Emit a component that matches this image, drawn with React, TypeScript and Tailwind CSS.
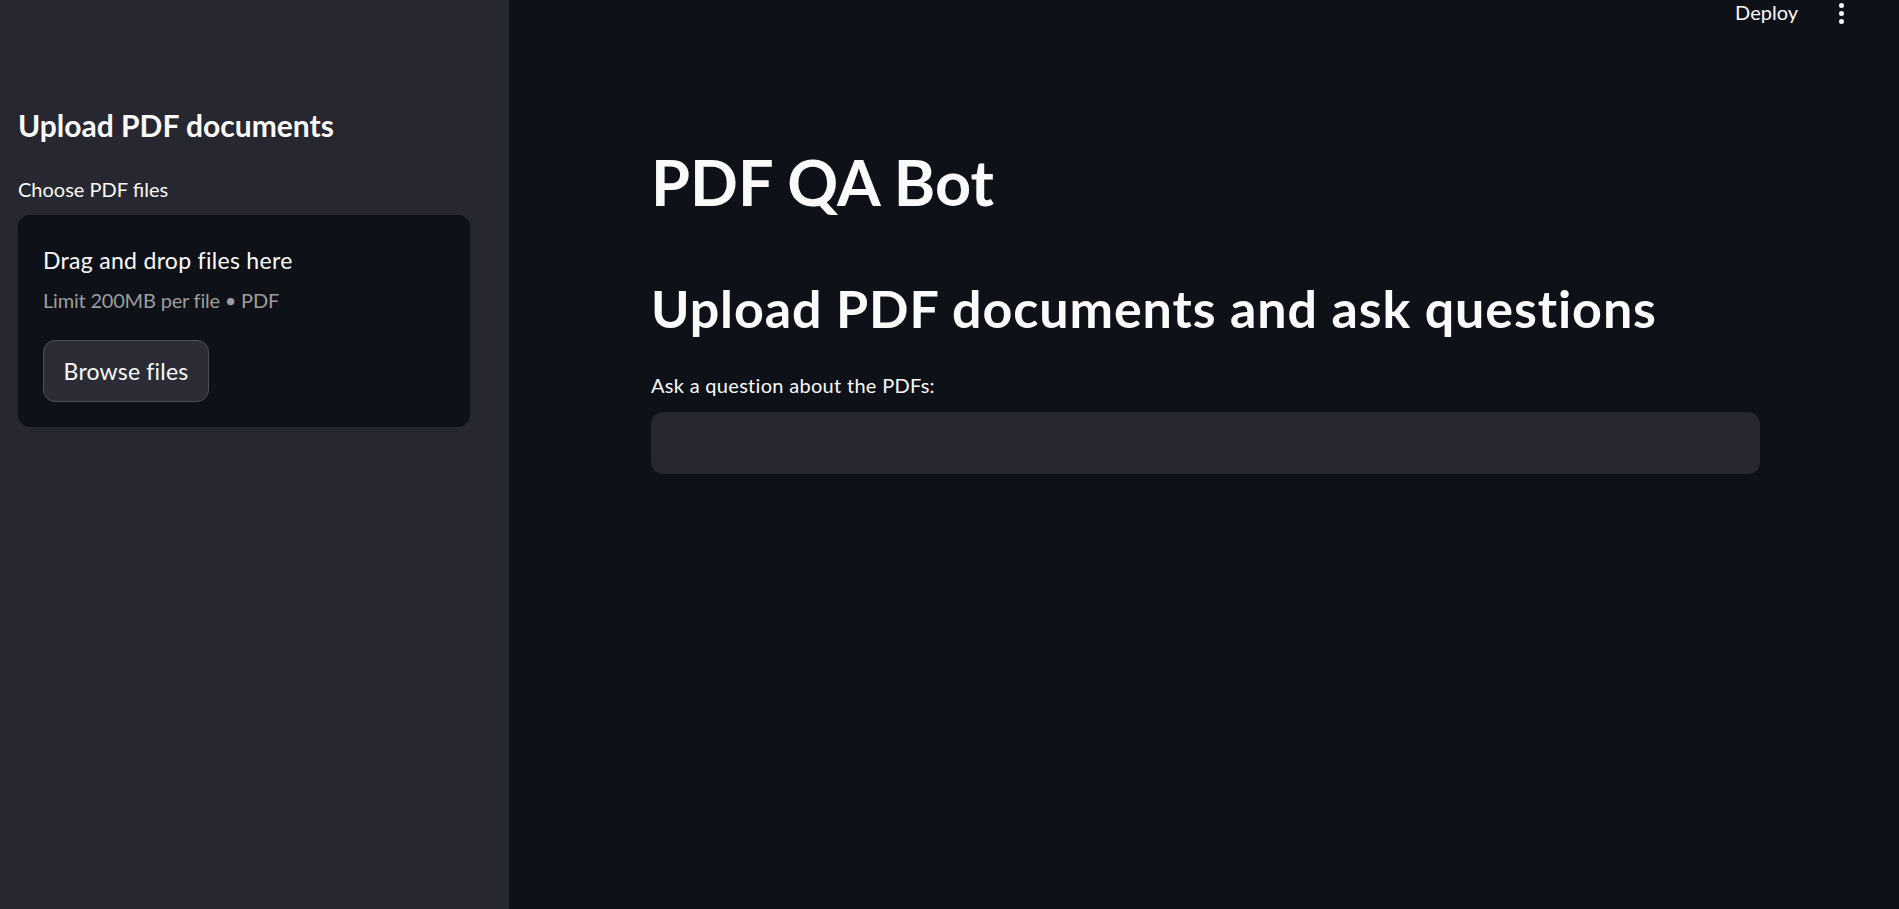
import React from 'react';

const font = { fontFamily: 'Lato, "Noto Sans", sans-serif' };

function Sidebar() {
  return (
    <aside className="w-[509px] shrink-0 h-full bg-[#262730] pl-[18px] pr-[39px] pt-[105px]">
      <h2 className="text-[30px] leading-[40px] font-bold text-[#fafafa]">Upload PDF documents</h2>
      <label className="block mt-[30px] text-[20px] leading-[28px] text-[#fafafa]">Choose PDF files</label>
      <div className="mt-[12px] rounded-[12px] bg-[#0e1117] pl-[25px] pt-[29px] pb-[25px]">
        <div className="text-[23px] leading-[32px] tracking-[0.3px] text-[#fafafa]">Drag and drop files here</div>
        <div className="mt-[10px] text-[20px] leading-[28px] tracking-[-0.2px] text-[#9c9d9f]">
          Limit 200MB per file • PDF
        </div>
        <button className="mt-[26px] flex h-[62px] w-[166px] items-center justify-center rounded-[12px] border border-[#4d4e57] bg-[#2b2c36] text-[23px] leading-[32px] tracking-[0.2px] text-[#fafafa]">
          Browse files
        </button>
      </div>
    </aside>
  );
}

function Header() {
  return (
    <div className="flex h-[24px] items-start justify-end pr-[55px]">
      <span className="text-[20px] leading-[24px] text-[#fafafa]">Deploy</span>
      <div className="ml-[41px] flex flex-col items-center gap-[3px] pt-[3px]">
        <span className="block h-[5px] w-[5px] rounded-full bg-[#fafafa]" />
        <span className="block h-[5px] w-[5px] rounded-full bg-[#fafafa]" />
        <span className="block h-[5px] w-[5px] rounded-full bg-[#fafafa]" />
      </div>
    </div>
  );
}

export default function App() {
  return (
    <div className="flex h-[909px] w-full overflow-hidden bg-[#0e1117]" style={font}>
      <Sidebar />
      <main className="flex-1">
        <Header />
        <div className="ml-[142px] mt-[118px] w-[1109px]">
          <h1 className="text-[63px] leading-[80px] font-bold text-[#fafafa]">PDF QA Bot</h1>
          <h2 className="mt-[54px] text-[52px] leading-[64px] tracking-[0.9px] font-bold text-[#fafafa]">
            Upload PDF documents and ask questions
          </h2>
          <label className="mt-[31px] block text-[20px] leading-[28px] tracking-[0.3px] text-[#fafafa]">
            Ask a question about the PDFs:
          </label>
          <div className="mt-[13px] h-[62px] w-full rounded-[12px] bg-[#262730]" />
        </div>
      </main>
    </div>
  );
}
